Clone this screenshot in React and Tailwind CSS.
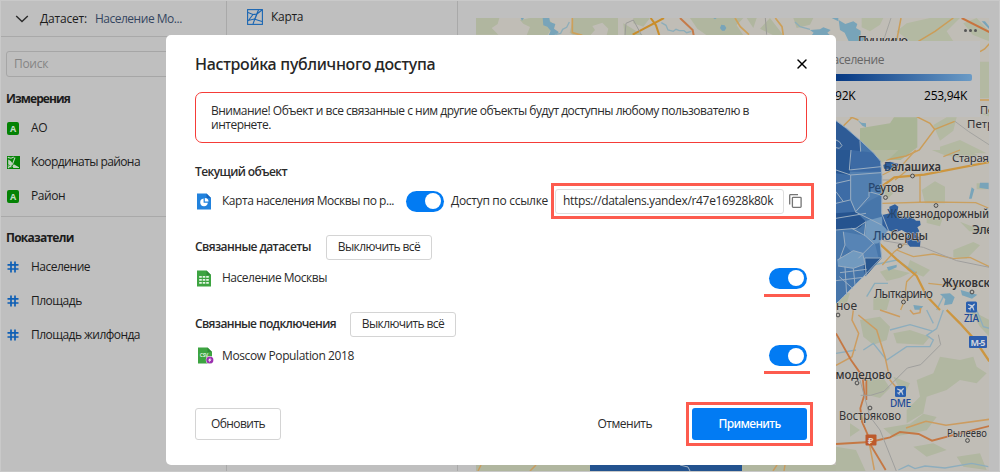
import { X } from "lucide-react";

const label = "whitespace-nowrap text-[12px] leading-[16px]";

function Toggle({ underline }) {
  return (
    <div className="relative flex h-[21px] w-[38px] shrink-0 items-center justify-end rounded-full bg-[#027bf3] pr-[3px]">
      <div className="h-4 w-4 rounded-full bg-white" />
      {underline && <div className="absolute top-[26px] -left-[5px] h-[3px] w-[46px] bg-[#fd5b4e]" />}
    </div>
  );
}

function GeoIcon({ className }) {
  return (
    <svg viewBox="0 0 16 16" className={className} fill="none" stroke="currentColor" strokeWidth="1.1">
      <rect x="0.6" y="0.6" width="14.8" height="14.8" />
      <path d="M1 3.500 6 5.500 10 5 15 1M11.500 1 9.500 5.500 6 15M1 11.500 7.200 10 15 12.500M6 5.500 1 12M8 10 10 5" />
    </svg>
  );
}

function LetterBadge() {
  return (
    <span className="flex h-[13px] w-[12px] items-center justify-center rounded-[2px] bg-[#048204] text-[9px] leading-none font-bold text-[#c4dcc4]">A</span>
  );
}

function GreenGeo() {
  return (
    <svg viewBox="0 0 13 13" className="h-[13px] w-[13px]">
      <rect width="13" height="13" fill="#048204" />
      <path d="M1.200 3.600 3.800 5 5.600 7.600 4 9.400 1.200 8.400ZM6.800 8.200 12 11.200V12H6.400L5.400 10.200Z" fill="#bfd2bf" />
      <path d="M.8 1.400 4 2.200 6.800 1M1 12 5.600 8 8 1.500M.8 9.800 4.500 11" stroke="#bfd2bf" strokeWidth="1.100" fill="none" />
    </svg>
  );
}

function HashIcon() {
  return (
    <svg viewBox="0 0 12 12" className="h-3 w-3" stroke="#0e5fb5" strokeWidth="1.7" fill="none">
      <path d="M4 .5v11M8 .5v11M.5 3.900h11M.5 8h11" />
    </svg>
  );
}

function Field({ icon, children, className }) {
  return (
    <div className="flex h-[34px] items-center pl-[6px]">
      <span className="flex w-[24px]">{icon}</span>
      <span className={`${label} ${className}`}>{children}</span>
    </div>
  );
}

function Sidebar() {
  return (
    <div className="flex w-[226px] shrink-0 flex-col border-r border-[#a9a9a9] text-[#1c1c1c]">
      <div className="flex h-9 shrink-0 items-center border-b border-[#a9a9a9] pl-[14px]">
        <svg viewBox="0 0 14 8" className="h-2 w-[14px]" fill="none" stroke="#2b2b2b" strokeWidth="1.4">
          <path d="M1.200 1 7 6.600 12.800 1" />
        </svg>
        <span className={`${label} ml-[11px] tracking-[-0.2px]`}>Датасет:</span>
        <span className={`${label} ml-[8px] tracking-[-0.48px] text-[#35465f]`}>Население Мо...</span>
      </div>
      <div className="mt-[14px] mr-[7px] ml-[5px] flex h-[26px] shrink-0 items-center rounded-[3px] border border-[#a6a6a6] pl-[7px]">
        <span className={`${label} tracking-[-0.3px] text-[#858585]`}>Поиск</span>
      </div>
      <div className="flex h-[44px] shrink-0 items-center pl-[5px]">
        <span className={`${label} font-bold tracking-[-0.9px]`}>Измерения</span>
      </div>
      <div className="-mt-[10px] flex flex-col">
        <Field icon={<LetterBadge />} className="tracking-[-0.4px]">АО</Field>
        <Field icon={<GreenGeo />} className="tracking-[-0.59px]">Координаты района</Field>
        <Field icon={<LetterBadge />} className="tracking-[-0.45px]">Район</Field>
      </div>
      <div className="mt-[3px] border-t border-[#a9a9a9]" />
      <div className="mt-[1px] flex h-[40px] shrink-0 items-center pl-[5px]">
        <span className={`${label} font-bold tracking-[-0.75px]`}>Показатели</span>
      </div>
      <div className="-mt-[8px] flex flex-col">
        <Field icon={<HashIcon />} className="tracking-[-0.5px]">Население</Field>
        <Field icon={<HashIcon />} className="tracking-[-0.5px]">Площадь</Field>
        <Field icon={<HashIcon />} className="tracking-[-0.54px]">Площадь жилфонда</Field>
      </div>
    </div>
  );
}

function Plane({ x, y }) {
  return (
    <g transform={`translate(${x} ${y})`}>
      <rect width="11" height="11" rx="1.5" fill="#2a5fae" />
      <path d="M9 2 7.600 2.400 6.300 3.800 2.300 2.600 1.800 3.200 4.900 5.100 3.600 6.600 2.200 6.500 1.800 7 3.400 7.700 4.100 9.200 4.600 8.800 4.500 7.400 6 6.100 7.800 9.200 8.400 8.700 7.200 4.700 8.600 3.400Z" fill="#c6cedb" />
    </g>
  );
}

function MapCanvas() {
  return (
    <svg viewBox="476 18 513 453" className="h-[453px] w-[513px]" fontFamily="'Noto Sans', 'Open Sans', sans-serif">
      <rect x="476" y="18" width="513" height="453" fill="#c0bdb6" />
      {/* northern edge */}
      <g transform="translate(460 0) scale(.33333)" fill="none">
        <g fill="#b0b69f">
          <path d="M48 54h70l-5 18-18 12 20 20H48ZM180 60l30-6h52l20 20-20 32h-62l10-25-20-10ZM340 54h134v52H440l5-20-18-18-30 10 8 12-16 18h-45l-15-10ZM490 70l60 36h-56ZM520 54h50l-20 26-30-10ZM690 54h160l-20 22 20 30H740l-28-20ZM930 54l40 52h-30l-40-20ZM1000 54h60l-10 20-40 10ZM860 54h30l-10 30Z" />
        </g>
        <path d="M248 54h20l2 12 16 6-4 14 14 10-6 10h-24l6-14-10-12-12-4ZM182 54h10l-6 8ZM784 74l10 2 5 8-5 8-8 0-6-8ZM1050 90l30-2 10-6 22 8-10 8 8 8h-55l6-8ZM760 54h10l-5 4ZM1115 54h20v10Z" fill="#78a4b9" />
        <path d="M328 66l-8 16-12 6-6 12-18 4M604 68l14 8 6 14 16 4 8-6 10 4 14 0 8 6 14-4M1005 66l15 14 30 8" stroke="#8dadb9" strokeWidth="4" />
        <path d="M337 54v44l30 8M825 54l16 26 26 24M946 54l20 26 4 26" stroke="#cda05a" strokeWidth="5" />
        <path d="M518 104 612 54M572 54l16 22 10 30" stroke="#c98d2b" strokeWidth="6" />
        <path d="M660 54l38 36 3 16" stroke="#c57b49" strokeWidth="6" />
        <path d="M495 106 498 70 520 60 545 106M916 54l4 50" stroke="#9b9b98" strokeWidth="3" />
      </g>
      {/* north-east */}
      <g transform="translate(830 0) scale(.33333)" fill="none">
        <g fill="#b3b9a2">
          <path d="M95 54h65l-10 20-30 20-25-12ZM230 70l70-16h90l-40 40 20 30H240l-40-30ZM450 185h28v110h-28ZM400 70l40-16 38 40v30l-50-20ZM310 375l40-23h30l-10 40-40 30ZM330 440l60-20 80 40H330ZM450 340h28v10Z" />
          <path d="M90 385l90-15 12-18h70v90l-50 38H130L90 425Z" fill="#a9b496" />
        </g>
        <path d="M26 60l20 12 24-8 12 8-4 12 14 8 0 16 15 8-10 8H56L44 98l-14-8ZM80 358l14 10 14 2 0 12-10-4ZM455 64l10 0 12 15v8Z" fill="#78a4b9" />
        <path d="M213 54 200 122M370 54l-55 40-50 30M60 350l25 10M260 350l40 20 14 18 60-24M18 400l50-50M314 388l-46 62-40 18-60 12M450 155l14-8 14-16M450 300h28" stroke="#cb9d58" strokeWidth="4.500" />
        <path d="M395 54l83 42" stroke="#c8743e" strokeWidth="6" />
        <path d="M183 54l-20 60M375 364l40 30 62 40" stroke="#a3a3a0" strokeWidth="3" />
      </g>
      {/* east */}
      <g transform="translate(830 150) scale(.33333)" fill="none">
        <g fill="#b2b8a1">
          <path d="M90 0h115l-25 24-25 14-40-20ZM305 0h110l30 16-40 10-60-10ZM275 120l40-26 30 16 0 50-60 0ZM290 195l50 4-10 30-40-10ZM390 215l50 20 38-6v20l-60-5ZM370 300l60-24 20 10-40 40-40-4ZM150 365l30-10 60 14-30 14-40 10ZM20 420l40 10-10 30-32 10ZM240 330l60 30-20 20-50-20ZM130 440l50 5-10 35h-40ZM440 100l30 0v18h-30ZM160 110l30 20-20 20Z" />
        </g>
        <path d="M425 112l8 6-8 28h-8ZM450 98h26v20l-28-5ZM170 352l30-8 0 8-24 10ZM330 432l30-2 14 12-8 20-24 4 4-18ZM392 420l50 14-16 12-30-10ZM250 465l30 4-10 10h-16Z" fill="#79a4b9" />
        <path d="M130 345l70-15 60 40M110 440l24-40 40 0M340 440l-20 40" stroke="#8badbb" strokeWidth="4" />
        <path d="M157 160l140-4 140 2 38 16M270 78l0 80M157 345l36-40 60-46M200 300l50 20 60-8 60 14 50-4 58 28M260 365l-30 30-8 60-10 25M157 75l60-30 40-45M195 90l50-40M340 20l50-20M295 400l90 10" stroke="#caa060" strokeWidth="4" />
        <path d="M157 108l36-26 90-8 195-38M145 278l55 50 60 50 30 60 40 42" stroke="#cc9640" strokeWidth="6.500" />
        <path d="M160 272l120 20 100 40 98 20M157 90h20" stroke="#a09f9e" strokeWidth="3" />
        <g fill="#305f9d">
          <path d="M18-88 50-65 95-25 130 8 152 34 156 80 155 190 175 240 150 275 155 322 100 380 40 440 18 462Z" fill="#4776aa" />
          <path d="M18-88 90-28 92 5 60 55 18 40Z" fill="#2e5b96" />
          <path d="M18 0h45v60l-10 20-35 10Z" fill="#285792" />
          <path d="M63 0 130 8 152 34v35l-90-4Z" fill="#3c6aa4" />
          <path d="M60 65h93v70l-40 20-35 30-18-35Z" fill="#527fb0" />
          <path d="M18 70l42 5v75l15 35-57 10Z" fill="#3d6ca6" />
          <path d="M18 190l60-5 30 30-20 20-70 5Z" fill="#25538f" />
          <path d="M110 212 155 200 172 245 145 280 130 282 105 258Z" fill="#7199bf" />
          <path d="M40 245l65 12 30 24 10 40-60 5-40-40Z" fill="#5784b5" />
          <path d="M22 330 70 302 98 310 105 342 70 355 24 348Z" fill="#729abf" />
          <path d="M104 324h51l-48 55-6-20Z" fill="#29578f" />
          <path d="M160 45 180 35 206 42 198 58 162 56Z" />
          <path d="M157 195 180 190 178 170 195 163 205 170 202 186 220 200 245 200 258 212 270 212 272 225 262 232 268 244 256 254 272 264 270 290 240 290 228 275 235 252 215 240 195 248 172 240 157 225Z" />
        </g>
        <path d="M18-88 50-65 95-25 130 8 152 34 156 80 155 190 175 240 150 275 155 322 100 380 40 440 18 462M90-28 92 5M63 0 58 60 153 50M18 60 62 75 153 68M62 75v75l15 35 40-45 0-15 36 10M18 100l44-10M40 155l-22-30M18 205l90-15M60 150 18 160M75 185l80 40M108 215l-5 40 30 27M18 240l60-5 30-20M40 245l5 40-15 40M105 257 65 235M85 325l45-45M22 330 70 302 98 310 105 342 70 355 24 348M104 324h51M104 324l5 55M30 368l80-10M45 350l5 85M18 392l82-10M70 355l5 50M28 380l40 35" stroke="#9aaec2" strokeWidth="3" />
        <path d="M18-30l10 5 8 12-8 8-10-2" stroke="#9aaec2" strokeWidth="3" />
      </g>
      {/* south-east */}
      <g transform="translate(830 310) scale(.33333)" fill="none">
        <g fill="#b1b7a1">
          <path d="M90 30l60-10 30 30-10 40-40 14-30-24ZM190 70l50-10 60 20-20 24-80-4ZM330 140l60 10 40-10 10 30 30 20-30 30-50-10-40 30-60 20-10 50-50 30 0-40 40-40-10-50 50-20ZM110 210l50-6 20 30-30 30-40-10ZM160 355l80-14 40-30 40 10-30 40-100 20ZM18 410l60 10 30 66H18ZM250 410l60-10 40 20-60 20ZM380 440l70-10 20 50-70-10ZM190 200l50 20-20 40ZM60 340l30 20-30 20ZM420 0l30 50 28 30V30Z" />
        </g>
        <path d="M100 120l30-20 40 50 60-40 70 0 10-20-20-14 30-20 20-56M18 130l60-10M180 60l60-16 70 20M440 0l20 50 18 5M205 480l30-14 20 10 30-8 60 6 80-14 50 10M290 0l20 40" stroke="#8dadbd" strokeWidth="4" />
        <path d="M70 0l-4 30 20 40-20 70-48 26M85 15 140 60 165 140 180 210 205 240M150 0l60 20M240 0l10 12 20-4 2-14M478 328l-130 18-60-12-60 20M118 400l15 80" stroke="#cc9c60" strokeWidth="4.500" />
        <path d="M18 70l45 80 35 50 5 55-12 40 5 40 24 55M109 210v60M18 402l102-6 60-14 30-16 56 6 40 20 60-16 112-28M122 405l45 75" stroke="#c57844" strokeWidth="5.500" />
        <path d="M350 0l40 40 45 50 43 64" stroke="#cc9640" strokeWidth="7" />
        <path d="M325 74l7 30-60 60-40 10-70 70-40 12h-30M90 210l30 110 30 40 50 126" stroke="#9f9f9d" strokeWidth="3" />
      </g>
      {/* southern edge */}
      <path d="M476 465h130v6H476ZM741 465h95v6h-95Z" fill="#b0b69f" />
      <path d="M590 465h152v6H590Z" fill="#23538f" />
      <path d="M680 465l8 2 2 4" stroke="#a5b5c4" fill="none" />
      <path d="M478 471l3-6M530 471l6-6M777 465l-4 6M785 465l-1 6" stroke="#c79c60" strokeWidth="1.5" fill="none" />
      {/* places */}
      <g fill="#c0bdb6" stroke="#4a4a4a" strokeWidth="1">
        <circle cx="912.500" cy="176" r="1.900" /><circle cx="885.500" cy="197.500" r="1.900" /><circle cx="936" cy="205.500" r="1.900" /><circle cx="900" cy="246" r="1.900" /><circle cx="972" cy="292" r="1.900" /><circle cx="903.500" cy="302" r="1.900" /><circle cx="838" cy="315" r="1.900" /><circle cx="857" cy="383" r="1.900" /><circle cx="870" cy="408" r="1.900" /><circle cx="967.500" cy="440.500" r="1.900" />
      </g>
      <g fill="#333335" fontSize="12" stroke="#c5c2bc" strokeWidth="1" paintOrder="stroke" strokeLinejoin="round">
        <text x="858" y="45" textLength="50" fontWeight="500">Пушкино</text>
        <text x="884" y="170.500" textLength="57" lengthAdjust="spacingAndGlyphs" fontWeight="600"><tspan fill="#27476f" stroke="none">Б</tspan>алашиха</text>
        <text x="868" y="192" textLength="36" fontWeight="500"><tspan fill="#27476f" stroke="none">Ре</tspan>утов</text>
        <text x="887" y="217.500" textLength="102" fontWeight="500" lengthAdjust="spacingAndGlyphs"><tspan fill="#27476f" stroke="none">Ж</tspan>елезнодорожный</text>
        <text x="972" y="234" fontWeight="500" textLength="21">Эле</text>
        <text x="873" y="240" textLength="55" fontWeight="500"><tspan fill="#27476f" stroke="none">Лю</tspan>берцы</text>
        <text x="942" y="286.500" textLength="48" fontWeight="600" lengthAdjust="spacingAndGlyphs">Жуковск</text>
        <text x="874" y="297.500" textLength="59">Лыткарино</text>
        <text x="836" y="310" textLength="21">ное</text>
        <text x="952" y="162" textLength="37" fontSize="11.500">Старая</text>
        <text x="980" y="114" fontSize="11">По</text>
        <text x="967" y="127.500" fontSize="11.500">Петр</text>
        <text x="820" y="379" textLength="72" fontWeight="500" lengthAdjust="spacingAndGlyphs">Домодедово</text>
        <text x="839" y="420" textLength="62" lengthAdjust="spacingAndGlyphs">Востряково</text>
        <text x="947" y="437" textLength="40" fontSize="11" lengthAdjust="spacingAndGlyphs">Рылеево</text>
      </g>
      <g fill="#214a96" fontSize="10" fontWeight="500">
        <text x="964" y="321.500" textLength="15">ZIA</text>
        <text x="890" y="406.500" textLength="21">DME</text>
      </g>
      <Plane x={966} y={301.5} />
      <Plane x={895} y={386} />
      <rect x="969" y="336" width="18" height="12" rx="1" fill="#2d5dac" />
      <text x="970.500" y="345.500" fontSize="9" textLength="15" fontWeight="700" fill="#d0d4dc">М-5</text>
      <rect x="865.500" y="434.500" width="11" height="11" rx="1" fill="#bd5a2c" />
      <text x="868" y="443.500" fontSize="9" fontWeight="700" fill="#ddd0c8">₽</text>
    </svg>
  );
}

function MapPanel() {
  return (
    <div className="relative ml-[18px] mt-[17px] h-[453px] w-[513px] overflow-hidden">
      <MapCanvas />
      <div className="absolute top-[11px] right-[12px] flex gap-[2px]">
        <i className="h-[3px] w-[3px] rounded-full bg-[#555]" />
        <i className="h-[3px] w-[3px] rounded-full bg-[#555]" />
        <i className="h-[3px] w-[3px] rounded-full bg-[#555]" />
      </div>
      <div className="absolute top-[23px] right-[9px] flex h-[76px] w-[194px] flex-col bg-[#bfbfbf] px-[8px] pt-[11px]">
        <span className={`${label} pl-[30px] tracking-[-0.4px] text-[#666]`}>Население</span>
        <div className="mt-[6px] h-[7px] shrink-0 rounded-[2px] bg-linear-to-r from-[#00246b] from-0% via-[#0b3f88] via-30% to-[#6b9bc6]" />
        <div className="mt-[7px] flex justify-between pr-[5px] pl-[25px]">
          <span className={`${label} tracking-[-0.26px] text-black`}>12,92K</span>
          <span className={`${label} tracking-[-0.26px] text-black`}>253,94K</span>
        </div>
      </div>
    </div>
  );
}

function DocIcon({ kind }) {
  return (
    <svg viewBox="0 0 16 17" className="h-[17px] w-4 shrink-0">
      <path d="M0 .5h9.500L14 5v11.500H0Z" fill={kind === "chart" ? "#2182dd" : "#3da441"} />
      <path d="M9.500.5V5H14Z" fill={kind === "chart" ? "#1766c0" : "#2f8a36"} />
      {kind === "chart" && (
        <>
          <path d="M6.600 5.600A3.800 3.800 0 1 0 10.800 9.800H6.600Z" fill="#fff" />
          <path d="M7.800 4.900v3.700h3.700A3.700 3.700 0 0 0 7.800 4.900Z" fill="#fff" />
        </>
      )}
      {kind === "table" && <path d="M2.200 6h2.600v1.800H2.200zM5.700 6h2.600v1.800H5.700zM9.200 6h2.600v1.800H9.200zM2.200 9h2.600v1.800H2.200zM5.700 9h2.600v1.800H5.700zM9.200 9h2.600v1.800H9.200zM2.200 12h2.600v1.800H2.200zM5.700 12h2.600v1.800H5.700zM9.200 12h2.600v1.800H9.200z" fill="#e6f5e6" />}
      {kind === "csv" && (
        <>
          <text x="1.800" y="9.500" fontSize="5" fontWeight="700" textLength="8.500" fontFamily="Open Sans, sans-serif" fill="#d8efd8">CSV</text>
          <circle cx="11.800" cy="13" r="4" fill="#fff" />
          <circle cx="11.800" cy="13" r="3.600" fill="#9b30b0" />
          <path d="M12.600 10.500 10 13.400h1.500L11 15.600l2.600-3h-1.500Z" fill="#fff" />
        </>
      )}
    </svg>
  );
}

function SectionHeader({ title, className }) {
  return (
    <div className="flex h-[25px] items-center">
      <span className={`${label} -mt-[2px] font-semibold ${className}`}>{title}</span>
      <button className={`${label} flex h-[25px] w-[106px] items-center justify-center rounded-[3px] border border-[#d4d4d4] pb-[1px] tracking-[-0.6px]`}>Выключить всё</button>
    </div>
  );
}

function AccessDialog() {
  return (
    <div className="absolute top-[35px] left-[166px] flex h-[430px] w-[670px] flex-col rounded-[5px] bg-white px-[29px] text-[#2b2b2b]">
      <div className="flex h-[57px] shrink-0 items-center justify-between">
        <h1 className="font-['Noto_Sans'] text-[16px] leading-5 font-medium tracking-[-0.3px] whitespace-nowrap text-[#262626]">Настройка публичного доступа</h1>
        <X className="-mr-[3px] h-4 w-4 text-black" strokeWidth={2.2} />
      </div>
      <div className="h-[51px] shrink-0 rounded-[7px] border border-[#f53c38] pt-[11px] pl-[15px] text-[12px] leading-[14px] tracking-[-0.49px] whitespace-nowrap">
        Внимание! Объект и все связанные с ним другие объекты будут доступны любому пользователю в<br />интернете.
      </div>
      <div className="mt-[18px] flex h-[22px] items-center">
        <span className={`${label} font-semibold tracking-[-0.6px]`}>Текущий объект</span>
      </div>
      <div className="-mr-[7px] flex h-9 items-center">
        <div className="ml-[2px] flex w-[25px] shrink-0"><DocIcon kind="chart" /></div>
        <span className={`${label} w-[184px] shrink-0 tracking-[-0.46px]`}>Карта населения Москвы по р...</span>
        <Toggle />
        <span className={`${label} ml-[7px] w-[100px] shrink-0 tracking-[-0.29px]`}>Доступ по ссылке</span>
        <div className="flex h-9 w-[263px] shrink-0 items-center border-3 border-[#fd5b4e] pl-[1px]">
          <div className="flex h-[25px] w-[229px] items-center rounded-[3px] border border-[#dedede] pl-[7px]">
            <span className={`${label} tracking-[-0.34px]`}>https://datalens.yandex/r47e16928k80k</span>
          </div>
          <svg viewBox="0 0 13 14" className="ml-[5px] h-[14px] w-[13px]" fill="none" stroke="#757575" strokeWidth="1.3">
            <path d="M.7 10.500V1.400Q.7.700 1.400.700H9" />
            <rect x="3.400" y="3.300" width="8.700" height="10" rx=".8" />
          </svg>
        </div>
      </div>
      <div className="mt-[16px]"><SectionHeader title="Связанные датасеты" className="w-[131px] tracking-[-0.58px]" /></div>
      <div className="mt-[7px] flex h-[22px] items-center">
        <div className="ml-[2px] flex w-[25px]"><DocIcon kind="table" /></div>
        <span className={`${label} grow tracking-[-0.49px]`}>Население Москвы</span>
        <Toggle underline />
      </div>
      <div className="mt-[23px]"><SectionHeader title="Связанные подключения" className="w-[155px] tracking-[-0.63px]" /></div>
      <div className="mt-[8px] flex h-[21px] items-center">
        <div className="ml-[3px] flex w-[24px]"><DocIcon kind="csv" /></div>
        <span className={`${label} grow tracking-[-0.38px]`}>Moscow Population 2018</span>
        <Toggle underline />
      </div>
      <div className="mt-[36px] -mr-[6px] flex h-[44px] items-center">
        <button className={`${label} flex h-8 w-[86px] items-center justify-center rounded-[3px] border border-[#d4d4d4] tracking-[-0.56px]`}>Обновить</button>
        <span className={`${label} mr-[34px] ml-auto tracking-[-0.5px]`}>Отменить</span>
        <div className="border-3 border-[#fd5b4e] p-[3px]">
          <button className={`${label} flex h-[32px] w-[115px] items-center justify-center rounded-[3px] bg-[#027bf3] pb-[1px] font-['Noto_Sans'] font-medium tracking-[-0.63px] text-white`}>Применить</button>
        </div>
      </div>
    </div>
  );
}

export default function App() {
  return (
    <div className="relative h-[472px] w-[1000px] overflow-hidden border border-[#c9c9c9] bg-[#bfbfbf] font-['Open_Sans','Noto_Sans',sans-serif]">
      <div className="flex h-full">
        <Sidebar />
        <div className="w-[231px] shrink-0 border-r border-[#a9a9a9] text-[#1c1c1c]">
          <div className="flex h-[32px] items-center pl-[20px]">
            <GeoIcon className="h-4 w-4 text-[#1a66b3]" />
            <span className={`${label} ml-[8px] tracking-[-0.3px]`}>Карта</span>
          </div>
        </div>
        <MapPanel />
      </div>
      <div className="absolute -top-px -left-px"><AccessDialog /></div>
    </div>
  );
}
